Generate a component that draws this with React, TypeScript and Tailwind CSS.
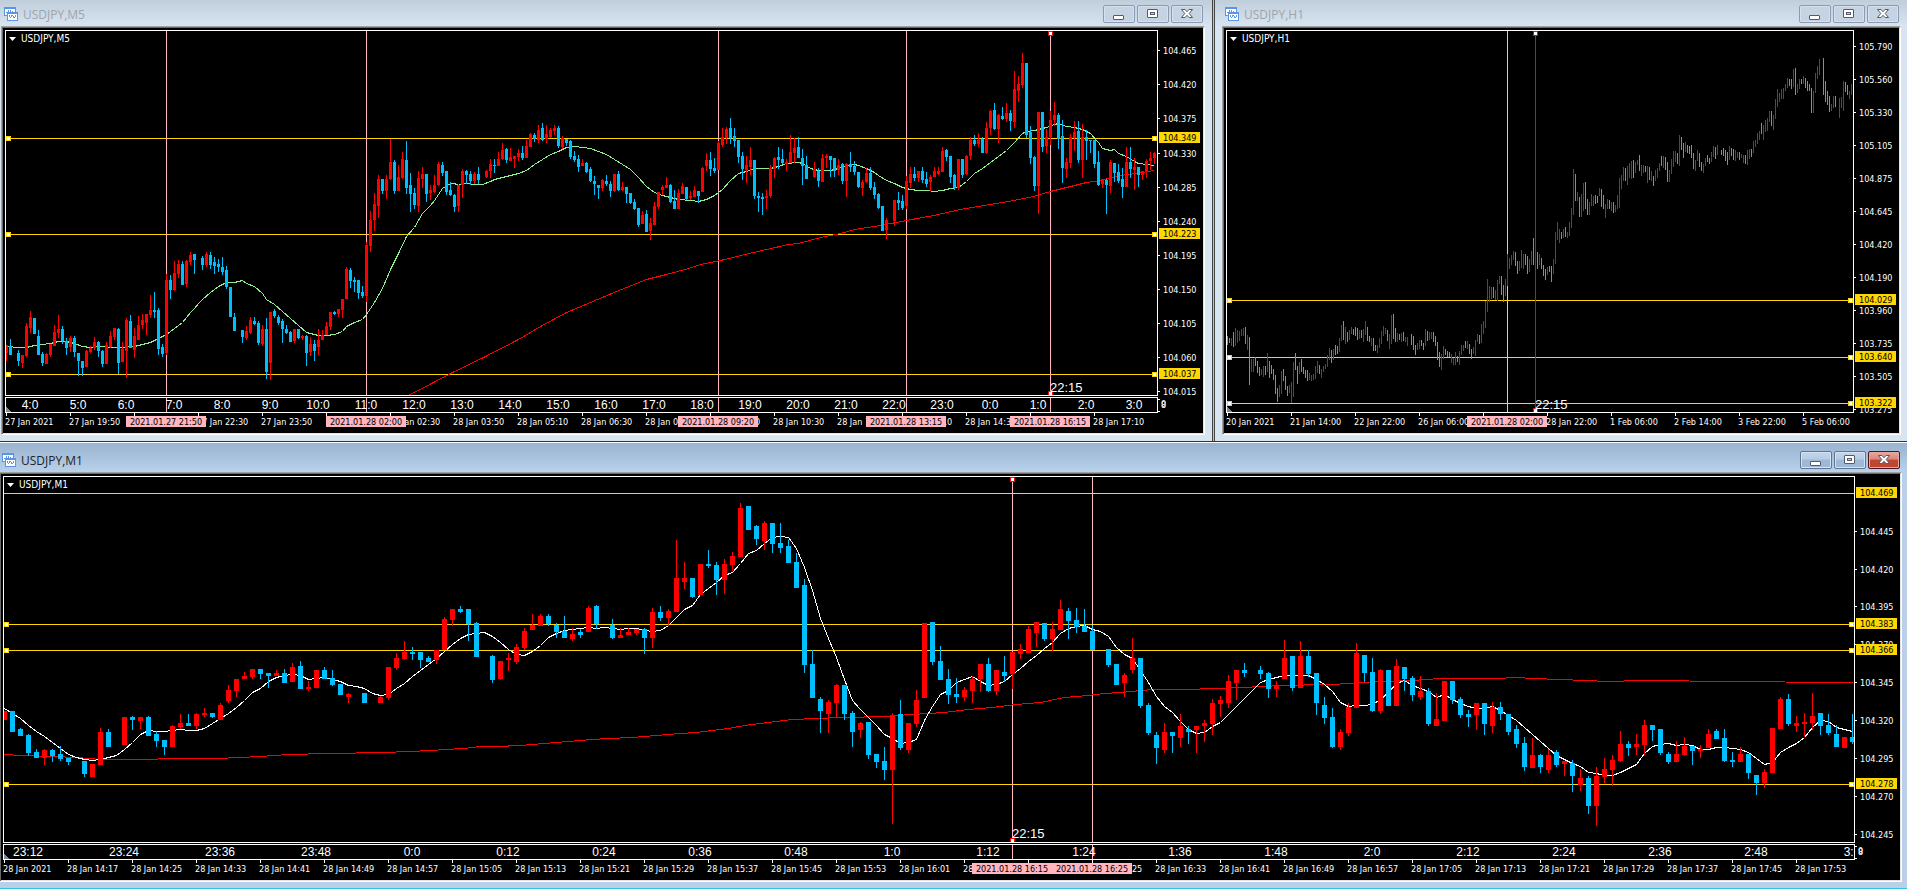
import type { ReactNode } from 'react'

// =============================================================
// Trading terminal — three USDJPY chart windows (M5, H1, M1)
// =============================================================

const RED = '#ff0000'
const BLUE = '#00bfff'
const GOLD = '#ffd700'
const PINK = '#ffb6c1'

const AXIS_FONT = "'DejaVu Sans Condensed', 'Noto Sans', sans-serif"
const LABEL_FONT = "'Liberation Sans', Arial, sans-serif"

// Quotes are stored in chart units, 3 units per pixel row, counted from `base`
const UNITS = 3

interface Candle {
  slot: number
  color: string
  high: number
  top: number
  bottom: number
  low: number
}

interface HLine {
  y: number
  label: string
  handles?: boolean
}

interface VLine {
  x: number
  color?: string
  label?: string
  note?: string
}

interface MaLine {
  color: string
  points: [number, number][]
}

interface ChartData {
  name: string
  step: number
  bodyWidth: number
  base: number
  candles: Candle[]
  lines: MaLine[]
  hLines: HLine[]
  vLines: VLine[]
  prices: [number, string][]
  times: string[]
  hours?: { first: number; step: number; labels: string[] }
  noteY: number
}

// "r812,812,839,839" = color, high, body top, body bottom, low; "-" = no bar
function parseCandles(src: string): Candle[] {
  return src
    .trim()
    .split(/\s+/)
    .flatMap((token, slot) => {
      if (token === '-') return []
      const v = token.slice(1).split(',').map(Number)
      const [high, top, bottom, low] = v.length === 2 ? [v[0], v[0], v[1], v[1]] : v
      return [{ slot, color: token[0] === 'r' ? RED : BLUE, high, top, bottom, low }]
    })
}

// "0:1037 3:1042" = slot:value
function parsePairs(src: string): [number, number][] {
  return src
    .trim()
    .split(/\s+/)
    .map((p) => p.split(':').map(Number) as [number, number])
}

function parseSeries(src: string): [number, number][] {
  return src
    .trim()
    .split(/\s+/)
    .map((v, i) => [i, Number(v)])
}

const M5: ChartData = {
  name: 'USDJPY,M5',
  step: 4,
  bodyWidth: 3,
  base: 93,
  noteY: 361,
  candles: parseCandles(`
    r1036,1036,1059,1083 b1017,1038,1065,1065 - b1050,1059,1083,1098 r1065,1065,1089,1104 r969,978,1068,1071
    r933,951,984,999 b954,954,1002,1002 b990,1008,1065,1065 b1056,1062,1089,1098 r1059,1062,1092,1092 r1032,1032,1065,1071
    r975,996,1038,1038 r945,987,999,1014 b978,987,1023,1032 b1014,1023,1044,1065 r1008,1014,1041,1056 b1008,1014,1056,1071
    b1059,1059,1083,1128 b1083,1083,1104,1128 r1050,1053,1101,1101 r1038,1044,1056,1059 r1011,1026,1044,1050 b1023,1026,1053,1071
    b1050,1053,1092,1101 r1026,1035,1092,1092 r993,1008,1041,1044 r984,984,1011,1020 b984,987,1089,1122 r1026,1047,1086,1086
    r954,960,1053,1134 b945,963,1044,1044 r984,1008,1050,1074 r948,975,1020,1020 r942,960,975,987 r942,942,969,1005
    r885,930,945,954 b876,930,936,954 b924,930,1047,1065 b1032,1041,1062,1071 r822,840,1059,1065 b825,840,870,897
    r783,819,870,873 r780,792,822,834 b783,792,855,855 r780,783,852,861 r756,765,786,795 b762,762,780,822
    - b768,774,795,810 r756,762,795,801 b756,765,795,807 b771,786,798,822 b777,792,801,816
    b771,801,816,825 b798,810,861,867 b861,861,951,951 b939,951,993,993 - b990,990,1011,1029
    r978,993,1014,1020 r951,960,999,1002 b951,963,972,975 b963,969,1029,1035 r975,987,1032,1038 b954,987,1116,1137
    r936,936,1089,1140 b927,933,948,954 b945,951,969,975 b957,963,987,1029 b975,987,999,1002 b993,996,1026,1026
    r987,987,1023,1029 b987,987,1014,1017 r1005,1008,1014,1020 b1005,1008,1059,1098 r1011,1032,1056,1068 b1020,1032,1053,1083
    r987,1020,1041,1065 r990,1005,1020,1020 r966,978,1005,1005 r936,936,981,990 b933,936,942,945 r927,927,942,951
    r897,897,930,954 r801,807,897,897 b804,810,843,864 b831,840,846,876 b840,840,879,897 b858,876,888,894
    r726,735,888,906 r633,660,738,756 r579,612,660,693 r525,537,618,654 b537,537,573,582 r525,537,573,597
    r417,486,537,540 b480,486,573,582 r495,531,573,573 r456,477,534,537 b423,480,564,582 b519,555,582,636
    b564,579,615,627 r513,534,618,636 r501,522,537,564 b522,522,582,606 r555,570,579,600 r525,555,576,579
    r486,492,555,558 b486,495,519,528 b513,513,576,585 b546,570,585,588 b582,585,621,636 r555,555,618,636
    r507,513,555,594 b510,513,525,552 b513,522,543,555 r516,522,543,552 b501,522,540,552 -
    r510,513,531,534 r477,492,513,534 b477,495,498,519 r456,477,498,498 r429,450,477,480 b444,447,480,489
    r444,471,483,483 r468,468,477,504 r447,459,471,483 b438,459,474,480 r420,438,474,474 r399,402,441,441
    b399,405,417,426 r375,390,420,429 b369,384,420,423 r375,402,417,429 r384,390,411,414 r375,384,393,405
    b378,384,438,444 r408,414,441,447 b417,417,429,438 b420,423,471,477 b453,468,480,486 b465,477,501,516
    r477,489,498,498 b486,489,516,519 b501,507,543,546 b528,543,552,585 b555,555,564,597 r537,540,564,573
    b525,543,552,558 b543,552,573,591 r522,522,573,576 b513,522,570,573 r546,561,570,573 b561,561,582,609
    b579,579,609,612 b597,606,627,630 b624,624,675,681 r633,645,672,672 b630,642,696,696 r654,669,693,720
    r606,618,675,675 r576,576,621,627 r555,561,570,585 r531,555,564,564 b552,555,606,609 b570,603,627,627
    r567,579,627,627 r549,558,582,582 b561,561,597,600 r573,588,594,600 r558,570,591,591 b573,573,588,609
    r501,504,576,576 r459,480,498,513 b456,480,507,528 b474,504,513,519 r423,429,510,510 r384,411,435,441
    r381,387,414,432 b354,384,414,432 b384,408,423,441 b420,420,471,489 b456,468,507,540 r468,495,510,549
    r441,480,501,525 b480,480,588,597 b576,588,594,636 b579,591,597,645 r570,588,594,627 r495,504,588,594
    r471,474,507,534 b441,471,480,507 b447,477,489,492 r477,486,492,513 r405,456,489,489 r414,444,459,489
    b411,441,474,474 b447,474,498,555 b468,495,537,537 - r486,507,531,534 b504,513,543,561
    r462,474,546,546 r462,468,474,504 b468,468,480,531 b474,474,513,531 r477,495,510,525 b489,492,543,552
    r489,492,543,591 b456,492,501,516 b483,498,516,525 b516,516,561,564 r540,546,564,588 r504,519,546,549
    b501,519,564,570 b546,561,585,597 b579,582,624,627 b618,618,693,693 r654,660,690,717 -
    r600,600,663,678 b576,600,609,630 b585,603,624,630 r528,543,618,627 r501,522,549,564 b501,522,534,543
    r513,513,534,546 b501,513,540,549 b516,537,552,561 r525,531,546,573 r501,513,531,531 r501,513,522,525
    r441,453,516,516 b447,450,471,483 b468,468,531,549 b522,525,564,570 r477,477,564,570 b477,477,525,534
    r465,468,522,525 r411,420,468,480 b405,420,432,438 r399,420,432,441 b411,417,459,459 r366,384,459,462
    r330,333,384,405 b309,330,387,390 r342,345,387,429 b321,348,357,360 r309,339,357,366 b330,339,363,393
    r213,267,366,384 r228,252,273,306 r159,189,255,264 b189,189,405,414 b378,396,474,492 b468,471,558,573
    r336,336,558,642 b336,336,441,456 r387,411,438,459 r333,360,411,435 r306,345,360,378 b339,345,417,447
    b360,408,504,549 r474,486,507,534 r402,411,489,504 r363,396,414,453 b363,393,480,489 r372,411,480,534
    b390,411,423,480 b420,420,423,459 b420,420,492,504 b453,486,555,558 r537,537,552,564 b537,540,555,642
    r480,486,558,579 b489,489,519,546 b492,516,543,549 b504,537,561,594 r441,486,561,561 b441,486,507,534
    r474,501,510,570 b501,501,525,561 r513,513,525,540 r477,483,516,534 r456,474,483,510 r456,459,474,492
  `),
  lines: [
    {
      color: RED,
      points: parsePairs(`
        100.5:1186 106.75:1147 111:1120 119.25:1070 128:1018 133.5:978 140:936 146:906 152.5:873 160:837 165:821
        170.5:804 173.5:792 178.5:779 186.75:755 195.5:731 198:728 203.5:712 208.5:699 212:688 218.5:674 225:661
        231.75:646 238.5:627 246:612 251.75:599 256.75:587 261:574 265:562 270:547 273.5:541 278.5:525 282.5:518 287:510
      `),
    },
    {
      color: '#90ee90',
      points: parsePairs(`
        0:1037 3:1042 5:1041 7:1034 9:1031 11:1028 13:1023 15:1023 17:1029 19:1039 21:1042 24:1038 26:1041 29:1042
        32:1039 34:1032 36:1026 38:1015 40:1002 42:985 44:965 45:950 46:935 47:925 48:910 49:897 51:877 53:857
        55:846 56:845 57:847 59:841 60:848 62:857 64:880 65:897 67:911 69:932 71:955 73:975 75:997 77:1003 78:1006
        80:1004 82:1002 84:992 85:979 87:967 89:958 90:941 92:905 94:865 96:806 98:760 100:708 102:680 104:640
        106:615 107:600 109:563 111:550 112:550 113:554 114:550 118:551 119:553 121:543 122:538 124:532 126:524
        128:518 130:510 132:492 134:476 136:463 138:452 140:440 142:438 144:440 146:443 148:453 150:463 152:477
        154:492 156:508 158:532 160:558 162:577 164:586 166:590 168:597 171:600 173:604 175:597 177:586 179:566
        181:539 183:520 185:512 187:505 191:505 193:497 195:490 198:485 199:489 201:505 203:511 206:511 208:503
        210:495 212:493 213:496 215:504 217:515 218:524 220:540 222:549 224:560 226:568 228:570 230:571 232:574
        234:570 236:565 238:560 240:543 242:519 244:503 246:487 248:469 250:449 252:426 254:398 255:392 257:391
        258:386 260:380 262:371 263:369 265:377 267:382 269:387 271:400 273:427 274:444 276:451 277:448 278:460
        280:469 282:482 283:490 285:492 287:494
      `),
    },
  ],
  hLines: [
    { y: 107, label: '104.349', handles: true },
    { y: 203, label: '104.223', handles: true },
    { y: 343, label: '104.037', handles: true },
  ],
  vLines: [
    { x: 160, label: '2021.01.27 21:50' },
    { x: 360, label: '2021.01.28 02:00' },
    { x: 712, label: '2021.01.28 09:20' },
    { x: 900, label: '2021.01.28 13:15' },
    { x: 1044, label: '2021.01.28 16:15', note: '22:15' },
  ],
  prices: [
    [19, '104.465'],
    [53, '104.420'],
    [87, '104.375'],
    [122, '104.330'],
    [156, '104.285'],
    [190, '104.240'],
    [224, '104.195'],
    [258, '104.150'],
    [292, '104.105'],
    [326, '104.060'],
    [360, '104.015'],
  ],
  times: [
    '27 Jan 2021', '27 Jan 19:50', '', '27 Jan 22:30', '27 Jan 23:50', '',
    '28 Jan 02:30', '28 Jan 03:50', '28 Jan 05:10', '28 Jan 06:30', '28 Jan 07:50', '28 Jan 09:10',
    '28 Jan 10:30', '28 Jan 11:50', '28 Jan 13:10', '28 Jan 14:30', '', '28 Jan 17:10',
  ],
  hours: {
    first: 24,
    step: 48,
    labels: Array.from({ length: 24 }, (_, i) => `${(i + 4) % 24}:0`),
  },
}

const H1: ChartData = {
  name: 'USDJPY,H1',
  step: 2,
  bodyWidth: 1,
  base: 93,
  noteY: 378,
  candles: parseCandles(`
    b1008,1036 b1014,1029 r1014,1038 b996,1041 r984,1038 r990,1029 r993,1023 r987,1008 r984,1008 b981,1032
    r1005,1050 b1011,1155 r1077,1116 r1077,1116 b1071,1098 b1083,1119 b1101,1128 r1107,1125 r1098,1131 b1098,1125
    r1059,1116 b1083,1134 b1095,1122 b1107,1140 b1125,1182 b1164,1206 r1155,1191 r1113,1182 b1107,1143 b1128,1170
    b1158,1188 r1155,1179 r1146,1209 r1086,1191 b1059,1110 b1098,1152 r1086,1122 b1077,1116 b1101,1122 b1110,1134
    b1110,1143 r1119,1140 r1125,1143 r1122,1140 r1098,1137 r1083,1119 b1095,1122 r1107,1134 r1098,1116 r1092,1107
    r1065,1101 r1044,1080 b1050,1089 r1047,1080 b1035,1065 b1038,1062 r1014,1056 r975,1023 b963,1020 r981,1032
    b996,1026 r990,1020 r981,1002 b987,1005 b981,1008 b984,1020 r990,1017 b990,1014 r987,1026 r963,1005
    b981,1023 b1008,1026 r1014,1038 b1014,1053 b1035,1053 r1035,1059 r1014,1044 r993,1032 r978,1008 r984,1002
    b990,1023 r1002,1047 r945,1032 b942,1017 b984,1026 r999,1026 b1002,1020 r999,1026 b996,1023 r1011,1026
    r1011,1038 - b1002,1035 b1008,1050 b1035,1065 r1029,1050 r1020,1047 b1020,1038 b1029,1050 r987,1038
    b993,1023 r996,1020 r996,1017 b996,1026 b1008,1038 b1026,1080 b1056,1101 r1062,1110 r1038,1077 b1047,1065
    b1053,1071 b1056,1071 r1062,1089 r1074,1095 r1056,1095 b1068,1086 r1053,1095 r1035,1065 r1035,1053 b1023,1044
    r1023,1047 b1032,1062 b1047,1077 r1041,1062 r1020,1068 r1002,1026 b1005,1032 r972,1029 r963,1002 r903,984
    r837,936 r858,906 r861,897 b861,894 r870,900 r840,903 r828,852 b828,885 b855,906 r837,888
    r762,858 r774,807 r765,795 r753,780 b756,798 b783,822 r783,813 r750,804 r762,807 b762,795
    b768,822 r777,816 r753,795 b714,795 - b756,807 r762,795 b774,807 b795,828 b807,840
    r801,825 b798,816 b798,846 r777,822 r696,792 r666,720 r687,729 b696,717 r687,714 b681,711
    r696,714 r666,708 r624,684 r507,645 b522,603 r576,603 b591,651 r582,651 r549,633 b546,627
    b597,645 r606,645 r582,618 r588,618 b585,612 b588,609 r564,588 b567,621 b585,627 r612,654
    r597,627 b600,627 r606,633 b606,639 r615,636 r585,627 r534,624 r525,567 r501,543 b504,543
    r498,555 r489,534 r483,537 b480,534 r486,519 r480,495 b465,513 r495,528 r495,519 b498,516
    r498,549 b501,540 r513,543 b528,558 r510,543 r504,534 r489,513 b468,498 r468,504 b471,510
    b486,546 r510,546 r477,522 r453,501 r453,486 b459,492 r405,498 b411,450 b429,474 r426,456
    b435,459 b438,462 b435,474 b459,507 r480,513 r450,483 b459,501 b486,513 r492,519 r474,498
    b465,486 b474,492 r456,486 r438,471 b441,477 r435,465 - b450,465 b444,468 b450,483
    b456,495 r438,480 b444,468 b447,480 r450,483 r456,474 b456,480 r462,474 r465,489 b465,492
    r450,495 r447,477 b447,471 r423,459 r420,441 r399,432 r393,420 b369,402 r375,420 r360,396
    r354,393 r333,366 b333,378 r345,390 r297,357 r267,321 r279,306 r267,297 r264,297 r252,273
    r234,264 b237,258 b237,267 r207,261 b204,285 r252,279 r237,267 b237,252 r228,252 b234,264
    b243,273 b252,273 b264,339 r273,339 r219,279 r198,237 r177,225 - b174,285 b243,306
    b273,315 b288,336 r312,333 r288,324 b288,321 - r294,354 r291,324 r243,333 b246,276
    b255,285 r273,297 r252,285
  `),
  lines: [],
  hLines: [
    { y: 269, label: '104.029', handles: true },
    { y: 326, label: '103.640', handles: true },
    { y: 372, label: '103.322', handles: true },
  ],
  vLines: [
    { x: 280, label: '2021.01.28 02:00' },
    { x: 308, color: RED, note: '22:15' },
  ],
  prices: [
    [15, '105.790'],
    [48, '105.560'],
    [81, '105.330'],
    [114, '105.105'],
    [147, '104.875'],
    [180, '104.645'],
    [213, '104.420'],
    [246, '104.190'],
    [279, '103.960'],
    [312, '103.735'],
    [345, '103.505'],
    [378, '103.275'],
  ],
  times: [
    '20 Jan 2021', '21 Jan 14:00', '22 Jan 22:00', '26 Jan 06:00', '',
    '28 Jan 22:00', '1 Feb 06:00', '2 Feb 14:00', '3 Feb 22:00', '5 Feb 06:00',
  ],
}

const M1: ChartData = {
  name: 'USDJPY,M1',
  step: 8,
  bodyWidth: 5,
  base: 111,
  noteY: 361,
  candles: parseCandles(`
    r812,812,839,839 b812,812,875,875 b864,867,887,887 b882,885,938,947 b928,936,953,953 r927,930,953,975
    b927,930,948,965 b918,942,957,963 b953,953,965,974 - b962,962,1001,1010 r971,971,1010,1010
    r864,876,974,974 b867,876,920,920 - r831,831,914,914 b828,831,839,869 r831,831,842,866
    b828,831,887,887 b873,882,903,920 b900,900,920,944 r855,858,922,922 r822,849,860,866 b822,849,858,858
    r820,822,857,866 r804,819,825,831 b819,819,831,833 r790,795,839,839 r735,750,783,789 r717,717,752,770
    r696,708,717,717 r687,687,711,716 b687,687,702,717 b699,699,708,744 r690,699,708,708 b687,699,728,728
    r669,681,725,725 b663,678,747,747 r723,741,747,753 r690,690,744,744 b681,690,717,717 b690,714,735,738
    b732,732,765,765 r760,762,771,789 - b759,759,789,789 - r768,771,789,789
    r681,681,774,780 r639,654,684,690 r603,636,657,660 b621,636,642,660 b636,636,660,684 b648,654,666,666
    r630,630,660,671 r531,537,630,630 r507,507,540,557 b498,507,516,519 b507,507,552,603 b546,549,651,651
    - b645,648,720,729 r663,663,717,720 r639,654,660,693 r612,621,666,671 r564,573,624,630
    r522,555,570,570 r522,528,557,557 b522,528,552,557 b549,555,576,594 b528,573,594,594 r564,582,597,602
    b567,576,585,594 r498,504,576,576 b495,498,552,567 - b537,555,594,597 r564,585,594,594
    r564,576,585,585 r567,567,579,585 b564,567,594,642 r504,516,594,624 b498,516,534,543 r507,513,534,557
    r300,414,516,516 r366,414,426,447 b414,414,471,473 r372,372,465,465 b330,372,378,384 b366,375,420,465
    r357,372,420,462 r336,348,375,394 r189,204,351,351 b198,198,270,270 b255,258,297,315 r243,249,303,330
    b249,249,312,339 b249,309,324,339 b300,318,369,369 b339,366,444,444 b417,435,675,699 b630,672,774,774
    b771,777,813,879 r780,786,822,879 r732,735,789,831 b735,735,822,840 b813,819,876,921 r846,849,870,894
    b846,846,945,957 b942,942,966,984 b921,963,990,1020 r819,825,990,1152 b780,822,924,930 r849,849,930,938
    r750,780,852,861 r549,549,774,774 b546,546,666,675 b618,663,720,720 b687,717,765,792 b714,762,771,789
    r741,750,771,783 r708,717,753,789 r672,672,717,756 b654,672,753,756 r690,690,753,765 b648,696,708,726
    r636,636,702,747 r612,627,642,657 r558,567,639,639 r546,546,579,621 b549,549,597,603 r546,567,597,633
    r480,507,570,570 b504,513,543,597 b504,540,561,579 b507,558,576,576 b558,573,630,630 -
    b627,627,675,681 b672,672,735,735 r699,705,729,771 r594,654,690,699 b654,654,798,804 b789,795,879,885
    b876,885,924,972 r849,876,930,938 b876,876,888,938 r822,858,894,921 b858,867,876,912 r858,858,870,939
    r840,849,858,906 r777,789,852,885 r768,780,792,831 r705,723,789,804 r690,690,729,780 b669,690,699,711
    - b678,690,702,717 b696,699,747,774 r723,735,747,771 r600,654,717,717 b648,648,744,753
    r603,648,744,744 b630,648,702,711 b699,699,789,825 b771,795,834,852 b804,831,921,924 r867,876,921,930
    r789,801,879,888 r609,639,804,804 b645,645,699,726 b654,696,813,816 r687,690,813,822 b690,690,798,798
    r657,678,798,798 b681,681,717,753 b708,714,765,783 r708,753,771,780 b744,753,852,858 r759,837,858,858
    r723,723,843,843 b723,723,780,792 b771,777,825,834 b810,822,831,861 r789,789,825,870 b789,789,852,885
    r786,801,858,879 b786,801,822,840 b822,822,876,885 b855,867,912,924 b891,909,981,993 r894,945,984,984
    b942,945,981,999 r927,945,990,999 b930,936,975,981 r963,963,972,1008 b960,969,1008,1056 r987,1014,1035,1053
    b1008,1014,1098,1122 r981,1008,1098,1158 r954,987,1011,1029 r945,960,990,1038 r873,912,963,966 b903,912,924,948
    r882,912,921,945 r840,855,915,945 b855,855,870,903 b867,867,939,945 b936,942,966,972 r903,942,966,966
    r891,918,945,948 b918,918,933,975 r915,927,933,954 r867,882,924,924 b867,873,897,897 b867,894,963,966
    b936,960,966,981 r921,942,966,966 b942,942,999,1017 b1005,1005,1029,1065 r987,996,1029,1044 r864,864,999,999
    r771,777,867,867 b762,777,852,858 r828,849,858,876 r819,846,852,891 r759,828,849,870 b819,819,858,885
    b822,855,879,885 b855,882,921,921 r891,891,924,924 b822,891,906,912
  `),
  lines: [
    {
      color: RED,
      points: parsePairs(`
        0:943 2:946 6:948 9:952 12:956 26.5:955 29.5:950 32:947 35.5:943 40.5:938 47.5:937 50.5:933 53.5:930 55:926
        57.5:924 59.5:919 61.5:918 64.5:914 67.5:909 70.5:904 73.5:896 75.5:893 78.5:891 81.5:884 84.5:879 86.5:876
        88.5:870 90.5:863 92.5:854 94.5:849 96.5:843 98.5:836 101.5:833 104.5:831 110.5:829 111.5:825 113.5:823
        115.5:820 117.5:817 119.5:811 120.5:806 123.5:802 126.5:793 129.5:785 132.5:771 135.5:766 137.5:760
        139.5:755 143.5:748 147.5:746 151.5:744 154.5:740 157.5:739 159.5:734 165.5:731 168.5:728 171.5:724
        176:719 179.5:715 186.5:714 189:712 191:714 194.5:718 197.5:720 200.5:724 204.5:721 216.5:722 228.5:725 231:727
      `),
    },
    {
      color: '#ffffff',
      points: parseSeries(`
        805 820 835 854 873 889 907 925 941 950 958 961 957 951 945 928 907 882 871 874
        874 869 868 871 871 863 848 834 818 800 779 757 743 723 710 706 703 705 716 713
        711 716 724 736 739 744 758 766 762 745 728 709 691 673 653 633 611 595 581 580
        577 588 605 626 641 646 634 616 591 579 571 566 565 561 563 562 565 567 565 563
        571 573 569 556 532 508 494 463 443 425 405 397 368 338 329 308 292 287 291 324
        380 450 533 595 652 718 779 807 831 854 883 893 910 907 897 840 798 761 751 726
        716 707 722 734 733 723 703 684 664 645 625 606 580 565 557 555 567 572 587 620
        643 655 690 725 768 797 817 842 868 880 876 857 845 821 797 773 749 727 716 711
        705 706 706 704 716 731 753 787 797 794 794 793 777 756 728 721 736 745 752 770
        762 776 790 798 803 804 799 811 826 841 862 883 903 925 944 957 969 977 997 999
        1005 1006 997 985 972 938 919 911 910 916 913 914 928 928 922 922 924 928 937 953
        971 966 936 922 910 891 860 839 842 860 868 873
      `),
    },
  ],
  hLines: [
    { y: 16, label: '104.469' },
    { y: 147, label: '104.383', handles: true },
    { y: 173, label: '104.366', handles: true },
    { y: 307, label: '104.278', handles: true },
  ],
  vLines: [
    { x: 1008, label: '2021.01.28 16:15', note: '22:15' },
    { x: 1088, label: '2021.01.28 16:25' },
  ],
  prices: [
    [54, '104.445'],
    [92, '104.420'],
    [129, '104.395'],
    [167, '104.370'],
    [205, '104.345'],
    [243, '104.320'],
    [281, '104.295'],
    [319, '104.270'],
    [357, '104.245'],
  ],
  times: [
    '28 Jan 2021', '28 Jan 14:17', '28 Jan 14:25', '28 Jan 14:33', '28 Jan 14:41', '28 Jan 14:49',
    '28 Jan 14:57', '28 Jan 15:05', '28 Jan 15:13', '28 Jan 15:21', '28 Jan 15:29', '28 Jan 15:37',
    '28 Jan 15:45', '28 Jan 15:53', '28 Jan 16:01', '28 Jan 16:09', '', '28 Jan 16:25',
    '28 Jan 16:33', '28 Jan 16:41', '28 Jan 16:49', '28 Jan 16:57', '28 Jan 17:05', '28 Jan 17:13',
    '28 Jan 17:21', '28 Jan 17:29', '28 Jan 17:37', '28 Jan 17:45', '28 Jan 17:53',
  ],
  hours: {
    first: 24,
    step: 96,
    labels: [
      '23:12', '23:24', '23:36', '23:48', '0:0', '0:12', '0:24', '0:36', '0:48', '1:0',
      '1:12', '1:24', '1:36', '1:48', '2:0', '2:12', '2:24', '2:36', '2:48', '3:0',
    ],
  },
}

function Handle({ x, y, color }: { x: number; y: number; color: string }) {
  return (
    <>
      <rect x={x} y={y} width={5} height={5} fill={color} />
      <rect x={x + 1} y={y + 1} width={3} height={3} fill="#fff" />
    </>
  )
}

function Plot({ data, height }: { data: ChartData; height: number }) {
  const row = (v: number) => Math.round((v - data.base) / UNITS)
  const half = (data.bodyWidth - 1) / 2

  return (
    <svg className="block w-full" height={height} shapeRendering="crispEdges" role="img" aria-label={data.name}>
      {data.hLines.map((h) => (
        <rect key={h.y} x={0} y={h.y} width="100%" height={1} fill={GOLD} />
      ))}
      {data.vLines.map((v) => (
        <rect key={v.x} x={v.x} y={0} width={1} height="100%" fill={v.color ?? PINK} />
      ))}
      {data.lines.map((line) => (
        <polyline
          key={line.color}
          fill="none"
          stroke={line.color}
          strokeWidth={1}
          points={line.points.map(([k, v]) => `${k * data.step + 0.5},${row(v) + 0.5}`).join(' ')}
        />
      ))}
      {data.candles.map((c) => (
        <g key={c.slot} fill={c.color}>
          <rect x={c.slot * data.step} y={row(c.high)} width={1} height={row(c.low) - row(c.high)} />
          {half > 0 && (
            <rect
              x={c.slot * data.step - half}
              y={row(c.top)}
              width={data.bodyWidth}
              height={Math.max(1, row(c.bottom) - row(c.top))}
            />
          )}
        </g>
      ))}
      {data.hLines.filter((h) => h.handles).map((h) => (
        <g key={h.y}>
          <Handle x={0} y={h.y - 2} color={GOLD} />
          <svg x="100%" overflow="visible">
            <Handle x={-5} y={h.y - 2} color={GOLD} />
          </svg>
        </g>
      ))}
      {data.vLines.filter((v) => v.note).map((v) => (
        <g key={v.x}>
          <Handle x={v.x - 2} y={0} color={RED} />
          <Handle x={v.x - 2} y={height - 4} color={RED} />
          <text x={v.x} y={data.noteY} fill="#fff" fontFamily={LABEL_FONT} fontSize={13}>
            {v.note}
          </text>
        </g>
      ))}
      <path d="M3 6h7l-3.5 4z" fill="#fff" shapeRendering="auto" />
      <text x={15} y={11} fill="#fff" fontFamily={AXIS_FONT} fontSize={10}>
        {data.name}
      </text>
      {!data.hours && <path d={`M0 ${height - 5}v5h5z`} fill="#778899" />}
    </svg>
  )
}

function PriceAxis({ data, height }: { data: ChartData; height: number }) {
  return (
    <svg className="block w-[45px] shrink-0" height={height} fontFamily={AXIS_FONT} fontSize={9} shapeRendering="crispEdges">
      {data.prices.map(([y, label]) => (
        <g key={label} fill="#fff">
          <rect x={0} y={y + 1} width={2} height={1} />
          <text x={5} y={y + 5}>{label}</text>
        </g>
      ))}
      {data.hLines.map((h) => (
        <g key={h.label}>
          <rect x={1} y={h.y - 5} width={41} height={11} fill={GOLD} />
          <text x={5} y={h.y + 4} fill="#000">{h.label}</text>
        </g>
      ))}
    </svg>
  )
}

// Narrow sub-window with the local time of every n-th bar
function HourStrip({ data }: { data: ChartData }) {
  if (!data.hours) return null
  const { first, step, labels } = data.hours
  return (
    <div className="mt-px flex">
      <div className="min-w-0 flex-1 border border-white">
        <svg className="block w-full" height={14} shapeRendering="crispEdges">
          {data.vLines.map((v) => (
            <rect key={v.x} x={v.x} y={0} width={1} height={14} fill={v.color ?? PINK} />
          ))}
          {labels.map((label, i) => (
            <text
              key={label}
              x={first + i * step}
              y={11}
              fill="#fff"
              fontFamily={LABEL_FONT}
              fontSize={12}
              textAnchor="middle"
            >
              {label}
            </text>
          ))}
          <path d="M0 9v5h5z" fill="#778899" />
        </svg>
      </div>
      <svg className="block w-[45px] shrink-0" height={16} fill="#fff" fontFamily={AXIS_FONT} fontSize={9}>
        <rect x={0} y={2} width={2} height={1} />
        <rect x={0} y={14} width={2} height={1} />
        <text x={3} y={10}>0</text>
        <text x={3} y={11}>8</text>
      </svg>
    </div>
  )
}

function TimeAxis({ data }: { data: ChartData }) {
  return (
    <div className="relative h-5 overflow-hidden text-[9px] leading-[13px] text-white" style={{ fontFamily: AXIS_FONT }}>
      <ol className="flex">
        {data.times.map((t, i) => (
          <li key={i} className="w-16 shrink-0 whitespace-nowrap">
            <span className="ml-px block h-[3px] w-px bg-white" />
            {t}
          </li>
        ))}
      </ol>
      {data.vLines.filter((v) => v.label).map((v) => (
        <span
          key={v.x}
          className="absolute top-[3px] h-[11px] w-20 whitespace-nowrap bg-[#ffb6c1] text-center text-black"
          style={{ left: v.x - 39 }}
        >
          {v.label}
        </span>
      ))}
    </div>
  )
}

function Chart({ data, height }: { data: ChartData; height: number }) {
  return (
    <div className="bg-black pt-0.5 pl-0.5">
      <div className="flex">
        <div className="min-w-0 flex-1 border border-white">
          <Plot data={data} height={height} />
        </div>
        <PriceAxis data={data} height={height + 2} />
      </div>
      <HourStrip data={data} />
      <TimeAxis data={data} />
    </div>
  )
}

function ChartIcon() {
  return (
    <svg className="shrink-0" width={14} height={14} viewBox="0 0 14 14" shapeRendering="crispEdges">
      <rect x={0} y={0} width={12} height={9} fill="#5b95e6" />
      <rect x={1} y={2} width={10} height={6} fill="#fff" />
      <path d="M2 5.5h2M4.500 3v3M6.500 3v2M8.500 4v2" stroke="#5b95e6" fill="none" />
      <rect x={3} y={5} width={11} height={9} fill="#5b95e6" />
      <rect x={4} y={7} width={9} height={6} fill="#fff" />
      <path d="M5 8h1v2h-1zM6 10h1v1h-1zM7 8h1v2h-1zM8 8h1v1h-1zM9 9h1v2h-1zM10 10h1v1h-1zM11 8h1v2h-1z" fill="#5b95e6" />
    </svg>
  )
}

function ControlButton({ label, close, active, children }: { label: string; close?: boolean; active?: boolean; children: ReactNode }) {
  const look =
    close && active
      ? 'border-[#4b1620] bg-linear-to-b from-[#e8aaa0] from-0% via-[#d98577] via-45% to-[#c0462f] to-50% shadow-[inset_0_0_0_1px_#e9a89c]'
      : active
        ? 'border-[#5f7692] bg-linear-to-b from-[#c4d8ec] from-0% via-[#b4cbe3] via-45% to-[#9db9d6] to-50% shadow-[inset_0_0_0_1px_#d3e3f3]'
        : 'border-[#8c9bb4] bg-[#c5d3e2] shadow-[inset_0_0_0_1px_#d5e1ed]'
  return (
    <button
      type="button"
      aria-label={label}
      className={`flex h-[18px] w-8 items-center justify-center rounded-xs border ${look}`}
    >
      {children}
    </button>
  )
}

function WindowControls({ active }: { active?: boolean }) {
  return (
    <div className="ml-auto flex gap-0.5">
      <ControlButton label="Minimize" active={active}>
        <svg width={12} height={12}>
          <rect x={0.5} y={7.5} width={10} height={4} rx={0.5} fill="#fff" stroke="#55596b" />
        </svg>
      </ControlButton>
      <ControlButton label="Restore" active={active}>
        <svg width={12} height={12}>
          <rect x={0.5} y={1.5} width={10} height={8} rx={0.5} fill="#fff" stroke="#55596b" />
          <rect x={3.5} y={4.5} width={4} height={2} fill="#c5d3e2" stroke="#55596b" />
        </svg>
      </ControlButton>
      <ControlButton label="Close" close active={active}>
        <svg width={12} height={12}>
          <path
            d="M0.500 1.500h3.500L6 3.700L8 1.500h3.500L8.200 5.500L11.500 9.500H8L6 7.300L4 9.500H0.500L3.800 5.500z"
            fill="#fff"
            stroke="#55596b"
            strokeLinejoin="round"
          />
        </svg>
      </ControlButton>
    </div>
  )
}

interface ChartWindowProps {
  data: ChartData
  height: number
  active?: boolean
  className?: string
  titleClassName: string
  bodyClassName: string
}

function ChartWindow({ data, height, active, className = '', titleClassName, bodyClassName }: ChartWindowProps) {
  return (
    <section className={`min-w-0 ${active ? 'bg-[#bccfe9]' : 'bg-[#d7e4f1]'} ${className}`}>
      <header
        className={`flex items-center gap-[5px] bg-linear-to-b ${
          active ? 'from-[#99b4d1] to-[#b9d1ea] text-[#222222]' : 'from-[#c0cddb] to-[#d7e4f1] text-[#a0a4a8]'
        } ${titleClassName}`}
      >
        <ChartIcon />
        <h2 className="pt-0.5 text-xs" style={{ fontFamily: "'Open Sans', 'Noto Sans', sans-serif" }}>
          {data.name}
        </h2>
        <WindowControls active={active} />
      </header>
      <div className={bodyClassName}>
        <div
          className={`border-t border-r border-b border-t-[#a0a0a0] border-r-white border-b-white ${
            active ? '' : 'border-l border-l-[#a0a0a0]'
          }`}
        >
          <div className="border-t border-r border-l border-t-[#696969] border-r-[#e3e3e3] border-l-[#696969]">
            <div className="border-b border-[#e3e3e3]">
              <Chart data={data} height={height} />
            </div>
          </div>
        </div>
      </div>
    </section>
  )
}

export default function App() {
  return (
    <main className="w-full overflow-hidden bg-[#d7e4f1]">
      <div className="flex">
        <ChartWindow
          data={M5}
          height={364}
          className="flex-[1212]"
          titleClassName="h-[26px] pt-0.5 pl-1 pr-[9px]"
          bodyClassName="pb-1.5 pl-px pr-[7px]"
        />
        <div className="w-[3px] shrink-0 border-x border-[#444444] bg-[#b9c4cf]" />
        <ChartWindow
          data={H1}
          height={381}
          className="flex-[692]"
          titleClassName="h-[26px] pt-0.5 pl-2.5 pr-2"
          bodyClassName="pb-1.5 pl-[7px] pr-1.5"
        />
      </div>
      <ChartWindow
        data={M1}
        height={365}
        active
        className="border-t border-b border-t-[#333333] border-b-[#2fc4e0]"
        titleClassName="h-[30px] border-t border-white pt-[5px] pl-0.5 pr-[7px]"
        bodyClassName="pb-1.5 pr-[5px]"
      />
    </main>
  )
}
